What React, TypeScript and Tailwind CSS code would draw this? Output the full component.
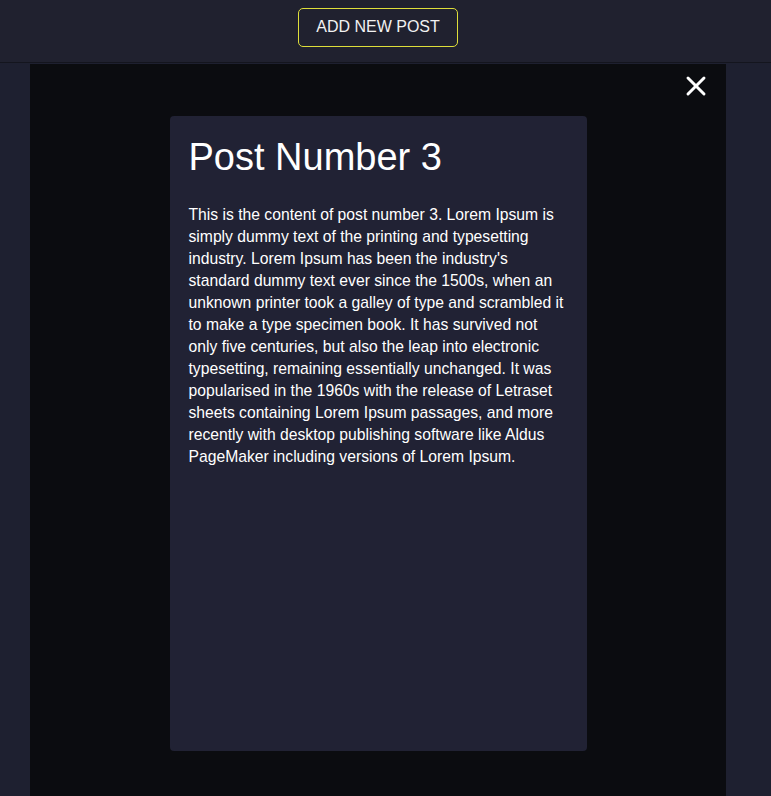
import { X } from 'lucide-react'

const content =
  "This is the content of post number 3. Lorem Ipsum is simply dummy text of the printing and typesetting industry. Lorem Ipsum has been the industry's standard dummy text ever since the 1500s, when an unknown printer took a galley of type and scrambled it to make a type specimen book. It has survived not only five centuries, but also the leap into electronic typesetting, remaining essentially unchanged. It was popularised in the 1960s with the release of Letraset sheets containing Lorem Ipsum passages, and more recently with desktop publishing software like Aldus PageMaker including versions of Lorem Ipsum."

export default function App() {
  return (
    <div
      className="h-[796px] overflow-hidden bg-[#1e2030] text-white"
      style={{ fontFamily: '"Liberation Sans", Arial, sans-serif' }}
    >
      {/* Header */}
      <header className="h-[63px] border-b border-[#14151e] bg-[#20212f] pt-2">
        <div className="flex w-[756px] justify-center">
          <button className="h-[39px] w-[160px] rounded-[5px] border border-[#dede3a] pb-px text-base uppercase text-[#f2f2f2]">
            Add new post
          </button>
        </div>
      </header>

      {/* Modal overlay */}
      <div className="relative ml-[30px] mt-px h-[740px] w-[696px] bg-[#0b0c10] pt-[52px]">
        <button className="absolute right-[14px] top-[6px] text-white">
          <X size={32} strokeWidth={2.2} />
        </button>

        <article className="mx-auto h-[635px] w-[417px] rounded-[4px] bg-[#212234] px-[19px] pt-[19px]">
          <h2 className="text-[38px] leading-[44px] text-white">Post Number 3</h2>
          <p className="mt-[25px] text-[15.7px] leading-[22px] text-white">{content}</p>
        </article>
      </div>
    </div>
  )
}
